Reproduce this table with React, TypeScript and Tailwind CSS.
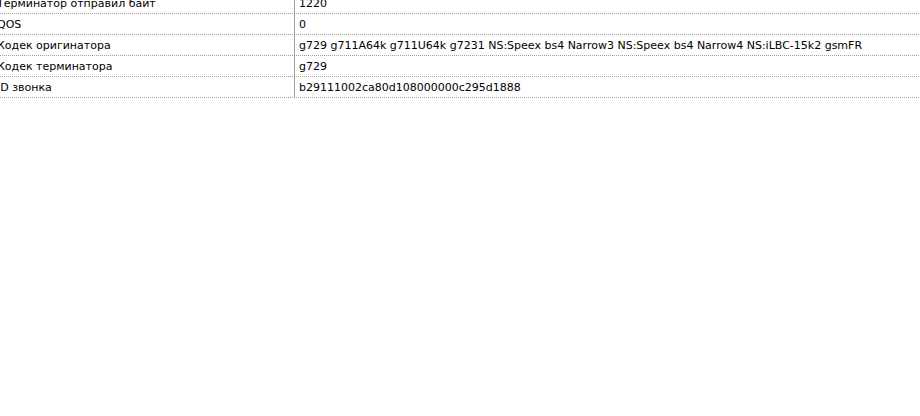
const rows: [string, string][] = [
  ['Терминатор отправил байт', '1220'],
  ['QOS', '0'],
  ['Кодек оригинатора', 'g729 g711A64k g711U64k g7231 NS:Speex bs4 Narrow3 NS:Speex bs4 Narrow4 NS:iLBC-15k2 gsmFR'],
  ['Кодек терминатора', 'g729'],
  ['ID звонка', 'b29111002ca80d108000000c295d1888'],
];

export default function App() {
  return (
    <div className="w-[920px] h-[416px] overflow-hidden bg-white">
      <div
        className="-mt-[7px] -ml-[7px] w-[1000px] text-[11px] text-black"
        style={{ fontFamily: '"DejaVu Sans", Verdana, sans-serif' }}
      >
        {rows.map(([k, v]) => (
          <div key={k} className="flex h-[21px] border-b border-dotted border-[#a0a0a0]">
            <div className="w-[302px] shrink-0 border-r border-solid border-[#a0a0a0] pl-[4px] pt-[2px] flex items-center whitespace-nowrap overflow-hidden">
              {k}
            </div>
            <div className="pl-[4px] pt-[2px] flex items-center whitespace-nowrap">{v}</div>
          </div>
        ))}
      </div>
    </div>
  );
}
